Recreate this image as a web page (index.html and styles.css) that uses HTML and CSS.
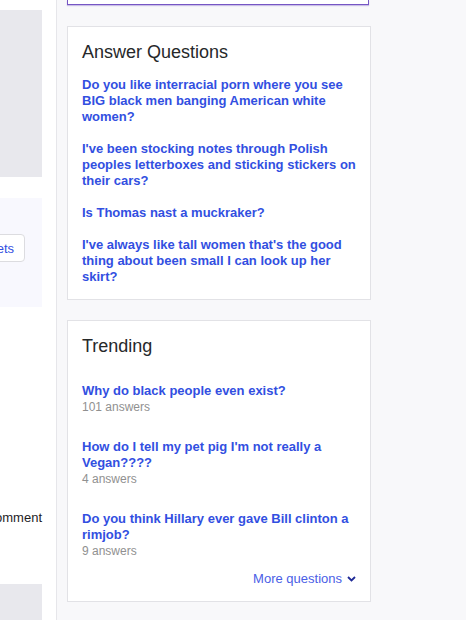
FILE: index.html
```html
<!DOCTYPE html>
<html lang="en">
<head>
<meta charset="utf-8">
<title>Answers</title>
<link rel="stylesheet" href="styles.css">
</head>
<body>
<div class="page">
  <aside class="main-col">
    <div class="gray-block"></div>
    <div class="sort-panel">
      <button class="pill">Sets</button>
    </div>
    <div class="comment-row">Comment</div>
    <div class="gray-block bottom"></div>
  </aside>
  <section class="side-col">
    <div class="search-box"></div>
    <div class="card">
      <h2 class="card-title">Answer Questions</h2>
      <ul class="q-list">
        <li><a class="q-link" href="#">Do you like interracial porn where you see BIG black men banging American white women?</a></li>
        <li><a class="q-link" href="#">I've been stocking notes through Polish peoples letterboxes and sticking stickers on their cars?</a></li>
        <li><a class="q-link" href="#">Is Thomas nast a muckraker?</a></li>
        <li><a class="q-link" href="#">I've always like tall women that's the good thing about been small I can look up her skirt?</a></li>
      </ul>
    </div>
    <div class="card trending">
      <h2 class="card-title">Trending</h2>
      <ul class="t-list">
        <li><a class="q-link" href="#">Why do black people even exist?</a><span class="count">101 answers</span></li>
        <li><a class="q-link" href="#">How do I tell my pet pig I'm not really a Vegan????</a><span class="count">4 answers</span></li>
        <li><a class="q-link" href="#">Do you think Hillary ever gave Bill clinton a rimjob?</a><span class="count">9 answers</span></li>
      </ul>
      <div class="more-row">
        <a class="more" href="#">More questions
          <svg class="chev" width="9" height="6" viewBox="0 0 9 6"><path d="M1 1 L4.5 4.5 L8 1" fill="none" stroke="#1f2a96" stroke-width="1.8"/></svg>
        </a>
      </div>
    </div>
  </section>
</div>
</body>
</html>
```

FILE: styles.css
```css
* { box-sizing: border-box; }
html, body {
  margin: 0;
  padding: 0;
  height: 100%;
}
body {
  font-family: "Liberation Sans", Arial, sans-serif;
  background: #f8f8fa;
  color: #26282a;
  overflow: hidden;
}
.page {
  display: flex;
  min-height: 620px;
}
.main-col {
  width: 57px;
  flex: none;
  background: #ffffff;
  border-right: 1px solid #e6e6ea;
  padding: 10px 14px 0 0;
  display: flex;
  flex-direction: column;
  overflow: hidden;
}
.gray-block {
  width: 42px;
  height: 167px;
  background: #e8e8ed;
  flex: none;
}
.gray-block.bottom {
  height: 60px;
  margin-top: 58px;
}
.sort-panel {
  width: 42px;
  height: 109px;
  margin-top: 21px;
  background: #f8f8fe;
  display: flex;
  justify-content: flex-end;
  align-items: flex-start;
  padding: 36px 17px 0 0;
  flex: none;
}
.pill {
  flex: none;
  height: 28px;
  padding: 0 10px;
  border: 1px solid #dcdce0;
  border-radius: 4px;
  background: #ffffff;
  color: #324fe1;
  font-family: "Liberation Sans", Arial, sans-serif;
  font-size: 13px;
  white-space: nowrap;
}
.comment-row {
  width: 42px;
  margin-top: 203px;
  display: flex;
  justify-content: flex-end;
  font-size: 13px;
  line-height: 16px;
  white-space: nowrap;
  color: #1d1d1f;
  flex: none;
}
.side-col {
  padding-left: 10px;
  width: 314px;
  flex: none;
}
.search-box {
  width: 302px;
  height: 5px;
  background: #ffffff;
  border: 1px solid #7656c4;
  border-top: none;
  box-shadow: 0 1px 1px rgba(118, 86, 196, 0.35);
}
.card {
  width: 304px;
  background: #ffffff;
  border: 1px solid #e2e2e6;
  padding: 14px 14px 14px 14px;
  margin-top: 21px;
}
.card.trending {
  margin-top: 20px;
}
.card-title {
  margin: 0;
  font-size: 18px;
  line-height: 22px;
  font-weight: normal;
  color: #26282a;
}
.q-list, .t-list {
  list-style: none;
  margin: 0;
  padding: 0;
}
.q-list {
  margin-top: 14px;
  display: flex;
  flex-direction: column;
  gap: 16px;
}
.q-link {
  display: block;
  font-size: 13px;
  line-height: 16px;
  font-weight: bold;
  color: #324fe1;
  text-decoration: none;
}
.t-list li {
  margin-top: 24px;
}
.t-list li:first-child {
  margin-top: 26px;
}
.count {
  display: block;
  font-size: 12px;
  line-height: 16px;
  color: #909090;
}
.more-row {
  margin-top: 12px;
  display: flex;
  justify-content: flex-end;
}
.more {
  display: flex;
  align-items: center;
  gap: 5px;
  font-size: 13px;
  line-height: 16px;
  color: #4a5ee6;
  text-decoration: none;
}
.chev { display: block; }
```
